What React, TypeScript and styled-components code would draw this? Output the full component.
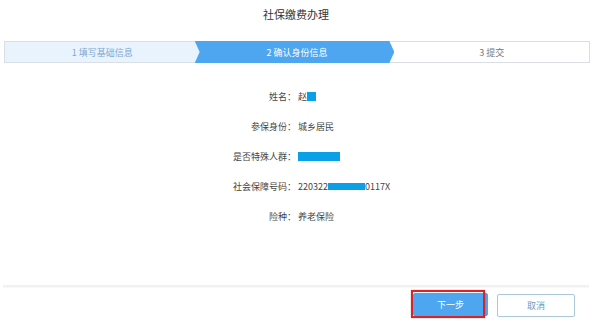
import React from "react";
import styled, { createGlobalStyle } from "styled-components";

const Global = createGlobalStyle`
  html, body { margin: 0; padding: 0; background: #fff; }
  body { font-family: "Noto Sans CJK SC", "Noto Sans", sans-serif; }
`;

const Page = styled.div`
  width: 592px;
  height: 320px;
  display: flex;
  flex-direction: column;
  background: #fff;
  overflow: hidden;
`;

const Title = styled.div`
  height: 28px;
  line-height: 28px;
  text-align: center;
  font-size: 11px;
  color: #333;
`;

const Steps = styled.div`
  margin: 13px 2px 0 4px;
  display: flex;
  height: 22px;
`;

type StepState = "done" | "active" | "todo";

const Step = styled.div<{ $state: StepState; $first?: boolean; $last?: boolean }>`
  position: relative;
  flex: 1;
  box-sizing: border-box;
  height: 22px;
  display: flex;
  align-items: center;
  justify-content: center;
  font-size: 9px;
  z-index: ${(p) => (p.$state === "done" ? 3 : p.$state === "active" ? 2 : 1)};
  margin-left: ${(p) => (p.$first ? "0" : "-5px")};
  padding-left: ${(p) => (p.$first ? "0" : "5px")};
  background: ${(p) =>
    p.$state === "done" ? "#e9f3fd" : p.$state === "active" ? "#4da6ef" : "#fff"};
  color: ${(p) =>
    p.$state === "done" ? "#7ea9cf" : p.$state === "active" ? "#fff" : "#777"};
  border-top: ${(p) => (p.$state === "active" ? "none" : "1px solid #d9dfe5")};
  border-bottom: ${(p) => (p.$state === "active" ? "none" : "1px solid #d9dfe5")};
  border-left: ${(p) => (p.$first ? "1px solid #d9dfe5" : "none")};
  border-right: ${(p) => (p.$last ? "1px solid #d9dfe5" : "none")};
  clip-path: ${(p) =>
    p.$last
      ? "none"
      : "polygon(0 0, calc(100% - 5px) 0, 100% 50%, calc(100% - 5px) 100%, 0 100%)"};
`;

const Form = styled.div`
  margin-top: 18px;
  display: grid;
  grid-template-columns: 296px 1fr;
  grid-auto-rows: 30px;
  align-items: center;
  font-size: 9px;
  color: #444;
`;

const Label = styled.div`
  text-align: right;
`;

const Value = styled.div`
  padding-left: 2px;
  display: flex;
  align-items: center;
`;

const Mask = styled.span<{ $w: number; $h?: number }>`
  display: inline-block;
  width: ${(p) => p.$w}px;
  height: ${(p) => p.$h ?? 9}px;
  background: #09a0e8;
`;

const Divider = styled.div`
  margin: 54px 3px 0 3px;
  height: 2px;
  background: #f1f1f1;
  box-shadow: 0 1px 1px rgba(0, 0, 0, 0.03);
`;

const Footer = styled.div`
  display: flex;
  justify-content: flex-end;
  gap: 9px;
  padding: 6px 17px 0 0;
`;

const Highlight = styled.span`
  position: relative;
  display: inline-flex;
  &::after {
    content: "";
    position: absolute;
    left: -2px;
    top: -3px;
    right: 3px;
    bottom: -1px;
    border: 2px solid #dd2226;
    box-shadow: 0 0 1px rgba(80, 0, 0, 0.5);
    pointer-events: none;
  }
`;

const Button = styled.button<{ $primary?: boolean }>`
  width: ${(p) => (p.$primary ? "75px" : "78px")};
  height: 23px;
  margin-top: ${(p) => (p.$primary ? "0" : "1px")};
  padding: 0;
  font-family: inherit;
  font-size: 9px;
  border-radius: 2px;
  cursor: pointer;
  background: ${(p) => (p.$primary ? "#4da6ef" : "#fff")};
  color: ${(p) => (p.$primary ? "#fff" : "#6a9cc0")};
  border: 1px solid ${(p) => (p.$primary ? "#4da6ef" : "#aac8d8")};
`;

export default function App() {
  return (
    <Page>
      <Global />
      <Title>社保缴费办理</Title>
      <Steps>
        <Step $state="done" $first>1 填写基础信息</Step>
        <Step $state="active">2 确认身份信息</Step>
        <Step $state="todo" $last>3 提交</Step>
      </Steps>
      <Form>
        <Label>姓名：</Label>
        <Value>
          赵<Mask $w={9} />
        </Value>
        <Label>参保身份：</Label>
        <Value>城乡居民</Value>
        <Label>是否特殊人群：</Label>
        <Value>
          <Mask $w={42} $h={9} />
        </Value>
        <Label>社会保障号码：</Label>
        <Value>
          220322<Mask $w={37} $h={7} />0117X
        </Value>
        <Label>险种：</Label>
        <Value>养老保险</Value>
      </Form>
      <Divider />
      <Footer>
        <Highlight>
          <Button $primary>下一步</Button>
        </Highlight>
        <Button>取消</Button>
      </Footer>
    </Page>
  );
}
